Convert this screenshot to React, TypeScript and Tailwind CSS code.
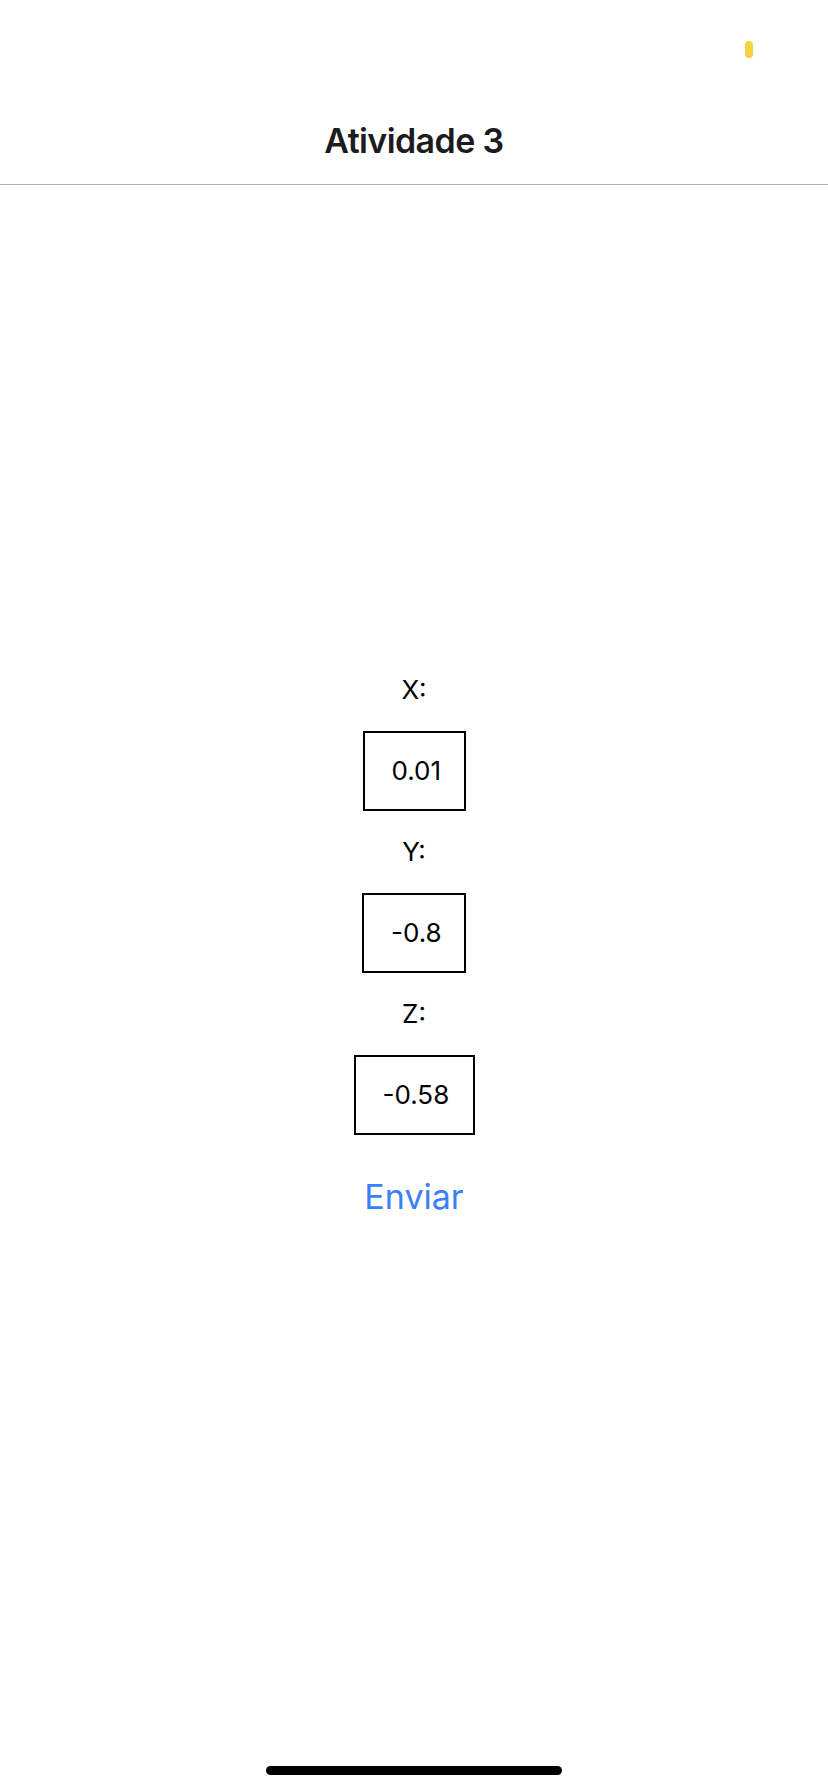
import React from "react";

export default function App() {
  return (
    <div
      className="flex h-[1792px] w-[828px] flex-col bg-white text-black"
      style={{ fontFamily: "Inter, 'Liberation Sans', sans-serif" }}
    >
      <header className="flex h-[185px] flex-col border-b border-[#b2b2b2]">
        <div className="flex justify-end pr-[75px] pt-[41px]">
          <div className="h-[17px] w-[8px] rounded-full bg-[#f6d243]" />
        </div>
        <h1 className="mt-[63px] text-center text-[34px] font-semibold leading-[40px] tracking-[-0.6px] text-[#1c1c1e]">
          Atividade 3
        </h1>
      </header>

      <main className="flex flex-col items-center">
        <div className="mt-[489px] text-[26px] leading-[32px]">X:</div>
        <div className="mt-[25px] w-[103px] border-2 border-black py-[22px] pl-[27px] text-[26px] leading-[32px]">
          0.01
        </div>
        <div className="mt-[25px] text-[26px] leading-[32px]">Y:</div>
        <div className="mt-[25px] w-[104px] border-2 border-black py-[22px] pl-[27px] text-[26px] leading-[32px]">
          -0.8
        </div>
        <div className="mt-[25px] text-[26px] leading-[32px]">Z:</div>
        <div className="mt-[25px] w-[121px] border-2 border-black py-[22px] pl-[27px] text-[26px] leading-[32px]">
          -0.58
        </div>
        <button className="mt-[40px] text-[34px] leading-[44px] text-[#3a80f6]">Enviar</button>
      </main>

      <div className="mt-auto mb-[17px] flex justify-center">
        <div className="h-[9px] w-[296px] rounded-full bg-black" />
      </div>
    </div>
  );
}
